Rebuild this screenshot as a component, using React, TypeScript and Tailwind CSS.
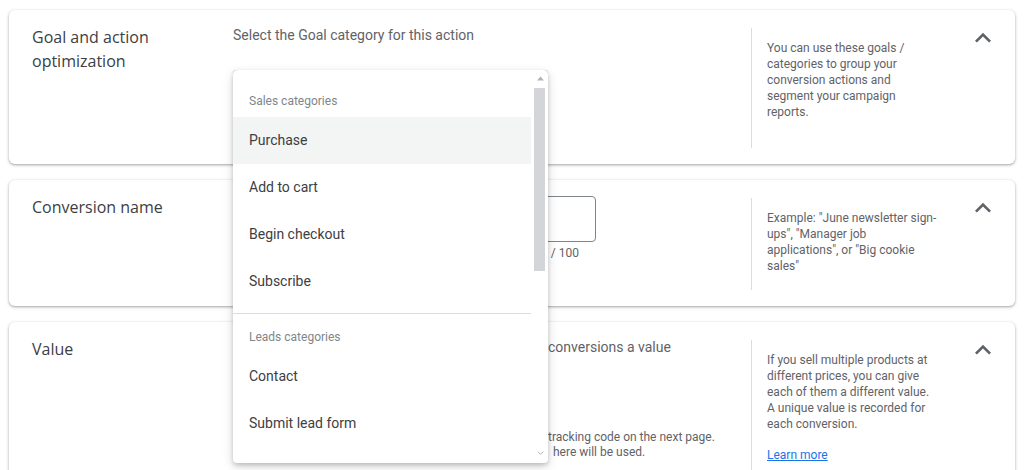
import React from 'react';

const helpGoal = [
  'You can use these goals /',
  'categories to group your',
  'conversion actions and',
  'segment your campaign',
  'reports.',
];

const helpName = [
  'Example: "June newsletter sign-',
  'ups", "Manager job',
  'applications", or "Big cookie',
  'sales"',
];

const helpValue = [
  'If you sell multiple products at',
  'different prices, you can give',
  'each of them a different value.',
  'A unique value is recorded for',
  'each conversion.',
];

const salesItems = ['Purchase', 'Add to cart', 'Begin checkout', 'Subscribe'];
const leadsItems = ['Contact', 'Submit lead form'];

// Material "expand_less" chevron
const Chevron: React.FC = () => (
  <svg viewBox="0 0 24 24" className="w-[32px] h-[32px] -mt-[3px] fill-[#5f6368]">
    <path d="M7.41 15.41L12 10.83l4.59 4.58L18 14l-6-6-6 6z" />
  </svg>
);

interface HelpProps {
  lines: string[];
  link?: string;
}

const Help: React.FC<HelpProps> = ({ lines, link }) => (
  <div className="w-[201px] shrink-0 self-stretch mt-[3px] mb-[16px] border-l border-[#dadce0] pl-[15px] pt-[12px]">
    <p className="text-[12px] leading-[16px] text-[#5f6368] whitespace-nowrap">
      {lines.map((l, i) => (
        <span key={i} className="block">
          {l}
        </span>
      ))}
    </p>
    {link && (
      <a href="#" className="block mt-[15px] text-[12px] leading-[16px] text-[#1a73e8] underline">
        {link}
      </a>
    )}
  </div>
);

interface CardProps {
  title: React.ReactNode;
  className?: string;
  help: React.ReactNode;
  children?: React.ReactNode;
}

const Card: React.FC<CardProps> = ({ title, className = '', help, children }) => (
  <div
    className={`flex bg-white rounded-[6px] pl-[23px] pr-[16px] pt-[15px] shadow-[0_1px_2px_rgba(60,64,67,0.3),0_1px_3px_1px_rgba(60,64,67,0.15)] ${className}`}
  >
    <h3 className="w-[201px] shrink-0 font-['Open_Sans',sans-serif] font-medium text-[16px] leading-[24px] text-[#3c4043]">
      {title}
    </h3>
    <div className="relative w-[518px] shrink-0">{children}</div>
    {help}
    <div className="flex-1 flex justify-end items-start">
      <Chevron />
    </div>
  </div>
);

const Dropdown: React.FC = () => (
  <div className="absolute left-0 top-[45px] z-20 w-[315px] h-[393px] flex bg-white rounded-[4px] overflow-hidden shadow-[0_2px_4px_rgba(0,0,0,0.18),0_4px_12px_rgba(0,0,0,0.14)]">
    <div className="w-[298px] shrink-0 pt-[15px]">
      <div className="h-[32px] flex items-center pl-[16px] text-[12px] text-[#80868b]">Sales categories</div>
      {salesItems.map((item, i) => (
        <div
          key={item}
          className={`h-[47px] flex items-center pl-[16px] text-[14px] text-[#3c4043] ${i === 0 ? 'bg-[#f3f4f4]' : ''}`}
        >
          {item}
        </div>
      ))}
      <div className="mt-[8px] border-t border-[#dadce0]" />
      <div className="pt-[7px] h-[39px] flex items-center pl-[16px] text-[12px] text-[#80868b]">Leads categories</div>
      {leadsItems.map((item) => (
        <div key={item} className="h-[47px] flex items-center pl-[16px] text-[14px] text-[#3c4043]">
          {item}
        </div>
      ))}
    </div>
    {/* scrollbar */}
    <div className="flex-1 flex flex-col">
      <svg viewBox="0 0 10 6" className="mt-[6px] ml-[6px] w-[7px] h-[5px] fill-[#b0b3b8]">
        <path d="M0 6 L5 0 L10 6z" />
      </svg>
      <div className="mt-[7px] ml-[3px] w-[11px] h-[183px] bg-[#d3d5d8]" />
      <div className="flex-1" />
      <svg viewBox="0 0 10 6" className="mb-[8px] ml-[6px] w-[7px] h-[4px] fill-none stroke-[#b0b3b8] stroke-[1.5]">
        <path d="M1 1 L5 5 L9 1" />
      </svg>
    </div>
  </div>
);

export default function App() {
  return (
    <div className="h-[470px] overflow-hidden bg-white px-[9px] pt-[10px] font-['Roboto',sans-serif]">
      <div className="flex flex-col gap-[16px]">
        <Card
          className="relative z-10 h-[154px]"
          title={
            <>
              Goal and action
              <br />
              optimization
            </>
          }
          help={<Help lines={helpGoal} />}
        >
          <p className="text-[14px] leading-[20px] text-[#5f6368]">Select the Goal category for this action</p>
          <div className="mt-[25px] w-[315px] h-[56px] rounded-[4px] border-2 border-[#1a73e8]" />
          <Dropdown />
        </Card>

        <Card className="h-[126px]" title="Conversion name" help={<Help lines={helpName} />}>
          <div className="mt-[1px] w-[363px] h-[46px] rounded-[4px] border border-[#80868b]" />
          <p className="w-[363px] mt-[3px] pr-[17px] text-right text-[12px] leading-[16px] text-[#5f6368]">/ 100</p>
        </Card>

        <Card className="h-[170px]" title="Value" help={<Help lines={helpValue} link="Learn more" />}>
          {/* the start of these lines sits under the open menu */}
          <p className="pl-[315px] text-[14px] leading-[20px] text-[#5f6368] whitespace-nowrap">conversions a value</p>
          <div className="mt-[73px] text-[12px] leading-[15px] text-[#5f6368] whitespace-nowrap">
            <p className="pl-[315px]">tracking code on the next page.</p>
            <p className="pl-[320px]">here will be used.</p>
          </div>
        </Card>
      </div>
    </div>
  );
}
